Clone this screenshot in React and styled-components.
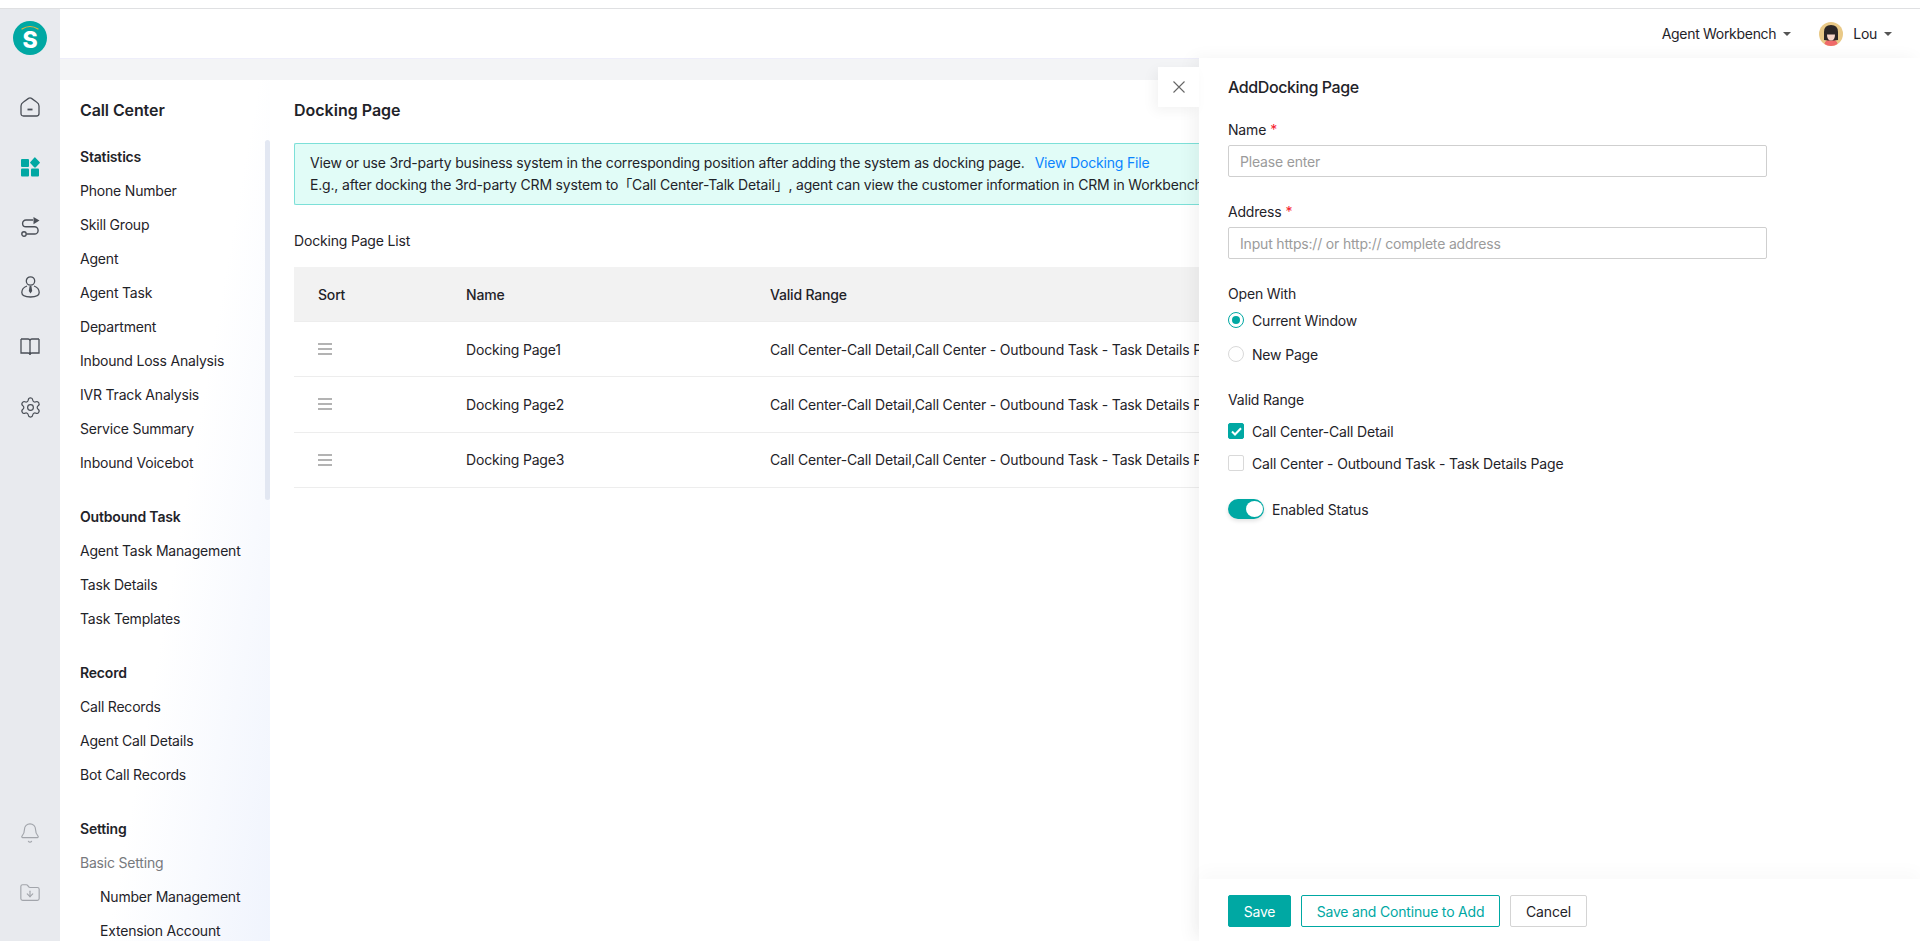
import React from 'react'
import styled, {createGlobalStyle} from 'styled-components'
import {Settings, Bell, FolderDown} from 'lucide-react'

const teal = '#00a8a3'

const GlobalStyle = createGlobalStyle`
  html, body {
    margin: 0;
    height: 100%;
    overflow: hidden;
    background: #fff;
  }
  * {
    box-sizing: border-box;
  }
  body {
    font-family: Inter, "Noto Sans CJK SC", "Liberation Sans", sans-serif;
    font-size: 14px;
    letter-spacing: -0.18px;
    color: #1f2329;
  }
`

const Page = styled.div`
  height: 941px;
  display: flex;
  flex-direction: column;
  overflow: hidden;
`

const TopStrip = styled.div`
  height: 9px;
  flex: none;
  background: #fff;
  border-bottom: 1px solid #dfe0e2;
`

const Body = styled.div`
  flex: 1;
  min-height: 0;
  display: flex;
  position: relative;
`

const Rail = styled.nav`
  width: 60px;
  flex: none;
  background: #e8eaee;
  display: flex;
  flex-direction: column;
  align-items: center;
  padding: 12px 0 18px;
`

const Logo = styled.div`
  height: 34px;
  margin-bottom: 22px;
  display: flex;
`

const RailSlot = styled.div`
  width: 60px;
  height: 60px;
  flex: none;
  display: flex;
  align-items: center;
  justify-content: center;
  color: ${p => p.$color || '#4a4f57'};
  margin-top: ${p => (p.$push ? 'auto' : '0')};
`

const Content = styled.div`
  flex: 1;
  min-width: 0;
  display: flex;
  flex-direction: column;
  background: #f3f4f6;
`

const Header = styled.header`
  height: 50px;
  flex: none;
  background: #fff;
  border-bottom: 1px solid #eeeefa;
  display: flex;
  align-items: center;
  justify-content: flex-end;
  padding-right: 28px;
`

const HeaderItem = styled.div`
  display: flex;
  align-items: center;
  margin-left: 28px;
  font-size: 14px;
  letter-spacing: -0.3px;
`

const Caret = styled.span`
  width: 0;
  height: 0;
  margin-left: 7px;
  border-left: 4px solid transparent;
  border-right: 4px solid transparent;
  border-top: 4px solid #555;
`

const AvatarBox = styled.div`
  width: 24px;
  height: 24px;
  margin-right: 10px;
  display: flex;
`

const Workspace = styled.div`
  flex: 1;
  min-height: 0;
  display: flex;
  margin-top: 21px;
`

const Sidebar = styled.aside`
  width: 210px;
  flex: none;
  position: relative;
  overflow: hidden;
  padding-left: 20px;
  background: linear-gradient(100deg, #fff 55%, #f0f4fd 100%);
`

const SideTitle = styled.div`
  height: 60px;
  line-height: 60px;
  font-size: 16px;
  font-weight: 600;
  letter-spacing: -0.1px;
`

const SideGroup = styled.div`
  margin-bottom: 20px;
`

const SideHead = styled.div`
  height: 34px;
  line-height: 34px;
  font-weight: 600;
`

const SideItem = styled.div`
  height: 34px;
  line-height: 34px;
  white-space: nowrap;
  letter-spacing: -0.2px;
  padding-left: ${p => (p.$sub ? '20px' : '0')};
  color: ${p => (p.$muted ? '#77797d' : '#1f2329')};
`

const ScrollThumb = styled.div`
  position: absolute;
  top: 60px;
  right: 0;
  width: 5px;
  height: 360px;
  border-radius: 3px;
  background: #e2e7f2;
`

// the drawer covers the right part of the page, so the main area stops at its edge
const Main = styled.main`
  flex: 1;
  min-width: 0;
  overflow: hidden;
  margin-right: 721px;
  background: #fff;
  padding-left: 24px;
`

const PageTitle = styled.h2`
  margin: 0 0 3px;
  height: 60px;
  line-height: 60px;
  font-size: 16px;
  font-weight: 600;
  letter-spacing: 0;
`

const Notice = styled.div`
  height: 62px;
  padding: 8px 15px;
  line-height: 22px;
  white-space: nowrap;
  overflow: hidden;
  background: #e1fcf7;
  border: 1px solid #7ce0d8;
  border-right: 0;
  border-radius: 2px 0 0 2px;
`

const NoticeLink = styled.a`
  color: #0a84ff;
  margin-left: 10px;
`

const ListLabel = styled.div`
  height: 20px;
  line-height: 20px;
  margin: 26px 0 16px;
`

const Row = styled.div`
  display: grid;
  grid-template-columns: 172px 304px minmax(0, 1fr);
  align-items: center;
  height: ${p => (p.$head ? '55px' : '55.34px')};
  white-space: nowrap;
  overflow: hidden;
  border-bottom: 1px solid #ededed;
  background: ${p => (p.$head ? '#f2f2f2' : '#fff')};
  font-weight: ${p => (p.$head ? 500 : 400)};
`

const SortCell = styled.div`
  padding-left: 24px;
  display: flex;
`

const Drawer = styled.section`
  position: absolute;
  top: 0;
  right: 0;
  bottom: 0;
  width: 721px;
  margin-top: 49px;
  background: #fff;
  box-shadow: -6px 0 16px rgba(0, 0, 0, 0.05);
  display: flex;
  flex-direction: column;
`

const CloseTab = styled.button`
  position: absolute;
  top: 9px;
  left: -41px;
  width: 41px;
  height: 40px;
  border: 0;
  padding: 0;
  background: #fff;
  box-shadow: -4px 4px 12px rgba(0, 0, 0, 0.05);
  display: flex;
  align-items: center;
  justify-content: center;
  color: #666;
`

const DrawerBody = styled.div`
  flex: 1;
  min-height: 0;
  padding: 0 29px;
`

const DrawerTitle = styled.h3`
  margin: 0 0 4px;
  height: 58px;
  line-height: 58px;
  font-size: 16px;
  font-weight: 500;
  letter-spacing: -0.4px;
`

const Field = styled.div`
  margin-bottom: ${p => p.$gap ?? 25}px;
`

const Label = styled.div`
  height: 20px;
  line-height: 20px;
  margin-bottom: ${p => p.$gap ?? 5}px;
`

const Star = styled.span`
  color: #f5222d;
  margin-left: 4px;
`

const TextInput = styled.input`
  display: block;
  width: 539px;
  height: 32px;
  padding: 0 11px;
  font: inherit;
  letter-spacing: inherit;
  color: inherit;
  background: #fff;
  border: 1px solid #cfcfcf;
  border-radius: 2px;
  outline: 0;
  &::placeholder {
    color: #9b9b9b;
    opacity: 1;
  }
`

const Choice = styled.div`
  display: flex;
  align-items: center;
  height: ${p => p.$height}px;
`

const RadioMark = styled.span`
  width: 16px;
  height: 16px;
  flex: none;
  margin-right: 8px;
  border-radius: 50%;
  border: 1px solid ${p => (p.$on ? teal : '#d9d9d9')};
  display: flex;
  align-items: center;
  justify-content: center;
  &::after {
    content: '';
    width: 8px;
    height: 8px;
    border-radius: 50%;
    background: ${p => (p.$on ? teal : 'transparent')};
  }
`

const CheckMark = styled.span`
  width: 16px;
  height: 16px;
  flex: none;
  margin-right: 8px;
  border-radius: 2px;
  border: 1px solid ${p => (p.$on ? teal : '#d9d9d9')};
  background: ${p => (p.$on ? teal : '#fff')};
  display: flex;
  align-items: center;
  justify-content: center;
`

const StatusRow = styled.div`
  display: flex;
  align-items: center;
  height: 20px;
  margin-top: 20px;
`

const Switch = styled.span`
  position: relative;
  width: 36px;
  height: 20px;
  margin-right: 8px;
  border-radius: 10px;
  background: ${teal};
  box-shadow: 0 2px 4px rgba(0, 0, 0, 0.12);
  &::after {
    content: '';
    position: absolute;
    top: 2px;
    right: 1px;
    width: 17px;
    height: 16px;
    border-radius: 50%;
    background: #fff;
  }
`

const DrawerFooter = styled.footer`
  height: 62px;
  flex: none;
  padding: 16px 29px 0;
  display: flex;
  gap: 10px;
  background: #fff;
  box-shadow: 0 -8px 16px rgba(0, 0, 0, 0.025);
`

const Button = styled.button`
  width: ${p => p.$width}px;
  height: 32px;
  padding: 0;
  font: inherit;
  letter-spacing: inherit;
  border-radius: 2px;
  border: 1px solid ${p => (p.$kind === 'plain' ? '#d4d4d4' : teal)};
  background: ${p => (p.$kind === 'primary' ? teal : '#fff')};
  color: ${p =>
    p.$kind === 'primary' ? '#fff' : p.$kind === 'plain' ? '#1f2329' : teal};
`

const LogoMark = () => (
  <svg width="34" height="34" viewBox="0 0 34 34">
    <circle cx="17" cy="17" r="17" fill={teal} />
    <path
      d="M9 8 Q17 3 25 8"
      fill="none"
      stroke="#e8b23c"
      strokeWidth="1.2"
      strokeLinecap="round"
    />
    <text
      x="17"
      y="27"
      textAnchor="middle"
      fontFamily="Inter, sans-serif"
      fontWeight="800"
      fontSize="23"
      fill="#fff"
    >
      S
    </text>
  </svg>
)

const HomeIcon = () => (
  <svg width="20" height="20" viewBox="0 0 20 20" fill="none" stroke="currentColor" strokeWidth="1.3">
    <path d="M1 9 Q1 6.5 3.5 5 L8.5 1.4 Q10 .5 11.5 1.4 L16.5 5 Q19 6.5 19 9 V16.5 Q19 19 16.5 19 H3.5 Q1 19 1 16.5 Z" />
    <path d="M7.5 12.5 H12.5" strokeWidth="1.8" />
  </svg>
)

const AppsIcon = () => (
  <svg width="19" height="20" viewBox="0 0 19 20" fill={teal}>
    <rect x="0" y="2" width="8" height="8" rx="1" />
    <rect x="0" y="11.5" width="8" height="8" rx="1" />
    <rect x="10" y="11.5" width="8" height="8" rx="1" />
    <path d="M14 .2 L18.8 5.2 Q19 5.7 18.8 6 L14.6 10.4 Q14 10.8 13.4 10.4 L9.2 6 Q9 5.7 9.2 5.2 L13.4 .6 Q14 0 14 .2 Z" />
  </svg>
)

const RouteIcon = () => (
  <svg width="19" height="20" viewBox="0 0 19 20" fill="none" stroke="currentColor" strokeWidth="1.4">
    <circle cx="3" cy="17" r="2.2" />
    <path d="M5.5 17 H13.5 A3.6 3.6 0 0 0 13.5 9.8 H5 A3.4 3.4 0 0 1 5 3 H12" />
    <path d="M12.5 0 L18.5 3.6 L12.5 7.2 Z" fill="currentColor" stroke="none" />
  </svg>
)

const AgentIcon = () => (
  <svg width="19" height="22" viewBox="0 0 19 22" fill="none" stroke="currentColor" strokeWidth="1.3">
    <circle cx="9.5" cy="5" r="4.2" />
    <path d="M6 10 C2.5 11.2 .8 14 .8 16.6 C.8 19.8 4.5 21 9.5 21 C14.5 21 18.2 19.8 18.2 16.6 C18.2 14 16.5 11.2 13 10" />
    <path d="M8.6 10 H10.4 L11.2 15 L9.5 17.4 L7.8 15 Z" fill="currentColor" stroke="none" />
  </svg>
)

const BookIcon = () => (
  <svg width="20" height="18" viewBox="0 0 20 18" fill="none" stroke="currentColor" strokeWidth="1.3">
    <path d="M1 1 H8 Q10 1 10 3 V17 M19 1 H12 Q10 1 10 3 M1 1 V15 H8 Q10 15 10 17 Q10 15 12 15 H19 V1" />
  </svg>
)

const HandleIcon = () => (
  <svg width="14" height="12" viewBox="0 0 14 12" stroke="#9a9a9a" strokeWidth="1.5">
    <path d="M0 1 H14 M0 6 H14 M0 11 H14" />
  </svg>
)

const CloseIcon = () => (
  <svg width="12" height="12" viewBox="0 0 12 12" stroke="currentColor" strokeWidth="1.1">
    <path d="M.5 .5 L11.5 11.5 M11.5 .5 L.5 11.5" />
  </svg>
)

const TickIcon = () => (
  <svg width="11" height="9" viewBox="0 0 11 9" fill="none" stroke="#fff" strokeWidth="2">
    <path d="M1 4.5 L4 7.5 L10 1.2" />
  </svg>
)

const AvatarIcon = () => (
  <svg width="24" height="24" viewBox="0 0 24 24">
    <circle cx="12" cy="12" r="12" fill="#e9c987" />
    <path d="M5.5 22 Q6 17.5 12 17.5 Q18 17.5 18.5 22 Q15.5 24 12 24 Q8.5 24 5.5 22 Z" fill="#ef6a6a" />
    <path d="M5 18 V10 Q5 3 12 3 Q19 3 19 10 V18 L15 18.5 H9 Z" fill="#2b2626" />
    <path d="M8 12.5 H16 Q16 18.5 12 18.5 Q8 18.5 8 12.5 Z" fill="#f6d4c8" />
  </svg>
)

const railTop = [
  {id: 'home', icon: <HomeIcon />},
  {id: 'apps', icon: <AppsIcon />},
  {id: 'route', icon: <RouteIcon />},
  {id: 'agent', icon: <AgentIcon />},
  {id: 'book', icon: <BookIcon />},
  {id: 'gear', icon: <Settings size={23} strokeWidth={1.25} />}
]

const menu = [
  {
    title: 'Statistics',
    items: [
      'Phone Number',
      'Skill Group',
      'Agent',
      'Agent Task',
      'Department',
      'Inbound Loss Analysis',
      'IVR Track Analysis',
      'Service Summary',
      'Inbound Voicebot'
    ]
  },
  {
    title: 'Outbound Task',
    items: ['Agent Task Management', 'Task Details', 'Task Templates']
  },
  {
    title: 'Record',
    items: ['Call Records', 'Agent Call Details', 'Bot Call Records']
  }
]

const rows = ['Docking Page1', 'Docking Page2', 'Docking Page3']
const validRange = 'Call Center-Call Detail,Call Center - Outbound Task - Task Details Page'

export default function App() {
  return (
    <Page>
      <GlobalStyle />
      <TopStrip />
      <Body>
        <Rail>
          <Logo>
            <LogoMark />
          </Logo>
          {railTop.map(item => (
            <RailSlot key={item.id}>{item.icon}</RailSlot>
          ))}
          <RailSlot $push $color="#a2a5ab">
            <Bell size={22} strokeWidth={1.25} />
          </RailSlot>
          <RailSlot $color="#a2a5ab">
            <FolderDown size={22} strokeWidth={1.25} />
          </RailSlot>
        </Rail>

        <Content>
          <Header>
            <HeaderItem>
              Agent Workbench
              <Caret />
            </HeaderItem>
            <HeaderItem>
              <AvatarBox>
                <AvatarIcon />
              </AvatarBox>
              Lou
              <Caret />
            </HeaderItem>
          </Header>

          <Workspace>
            <Sidebar>
              <SideTitle>Call Center</SideTitle>
              {menu.map(group => (
                <SideGroup key={group.title}>
                  <SideHead>{group.title}</SideHead>
                  {group.items.map(item => (
                    <SideItem key={item}>{item}</SideItem>
                  ))}
                </SideGroup>
              ))}
              <SideGroup>
                <SideHead>Setting</SideHead>
                <SideItem $muted>Basic Setting</SideItem>
                <SideItem $sub>Number Management</SideItem>
                <SideItem $sub>Extension Account</SideItem>
              </SideGroup>
              <ScrollThumb />
            </Sidebar>

            <Main>
              <PageTitle>Docking Page</PageTitle>
              <Notice>
                View or use 3rd-party business system in the corresponding position after adding the system as docking page.
                <NoticeLink>View Docking File</NoticeLink>
                <br />
                E.g., after docking the 3rd-party CRM system to「Call Center-Talk Detail」, agent can view the customer information in CRM in Workbench.
              </Notice>
              <ListLabel>Docking Page List</ListLabel>
              <Row $head>
                <SortCell>Sort</SortCell>
                <div>Name</div>
                <div>Valid Range</div>
              </Row>
              {rows.map(name => (
                <Row key={name}>
                  <SortCell>
                    <HandleIcon />
                  </SortCell>
                  <div>{name}</div>
                  <div>{validRange}</div>
                </Row>
              ))}
            </Main>
          </Workspace>
        </Content>

        <Drawer>
          <CloseTab aria-label="Close">
            <CloseIcon />
          </CloseTab>
          <DrawerBody>
            <DrawerTitle>AddDocking Page</DrawerTitle>
            <Field>
              <Label>
                Name<Star>*</Star>
              </Label>
              <TextInput placeholder="Please enter" />
            </Field>
            <Field>
              <Label>
                Address<Star>*</Star>
              </Label>
              <TextInput placeholder="Input https:// or http:// complete address" />
            </Field>
            <Field $gap={19}>
              <Label $gap={-1}>Open With</Label>
              <Choice $height={34}>
                <RadioMark $on />
                Current Window
              </Choice>
              <Choice $height={34}>
                <RadioMark />
                New Page
              </Choice>
            </Field>
            <Field $gap={0}>
              <Label>Valid Range</Label>
              <Choice $height={32}>
                <CheckMark $on>
                  <TickIcon />
                </CheckMark>
                Call Center-Call Detail
              </Choice>
              <Choice $height={32}>
                <CheckMark />
                Call Center - Outbound Task - Task Details Page
              </Choice>
            </Field>
            <StatusRow>
              <Switch />
              Enabled Status
            </StatusRow>
          </DrawerBody>
          <DrawerFooter>
            <Button $kind="primary" $width={63}>
              Save
            </Button>
            <Button $kind="outline" $width={199}>
              Save and Continue to Add
            </Button>
            <Button $kind="plain" $width={77}>
              Cancel
            </Button>
          </DrawerFooter>
        </Drawer>
      </Body>
    </Page>
  )
}
